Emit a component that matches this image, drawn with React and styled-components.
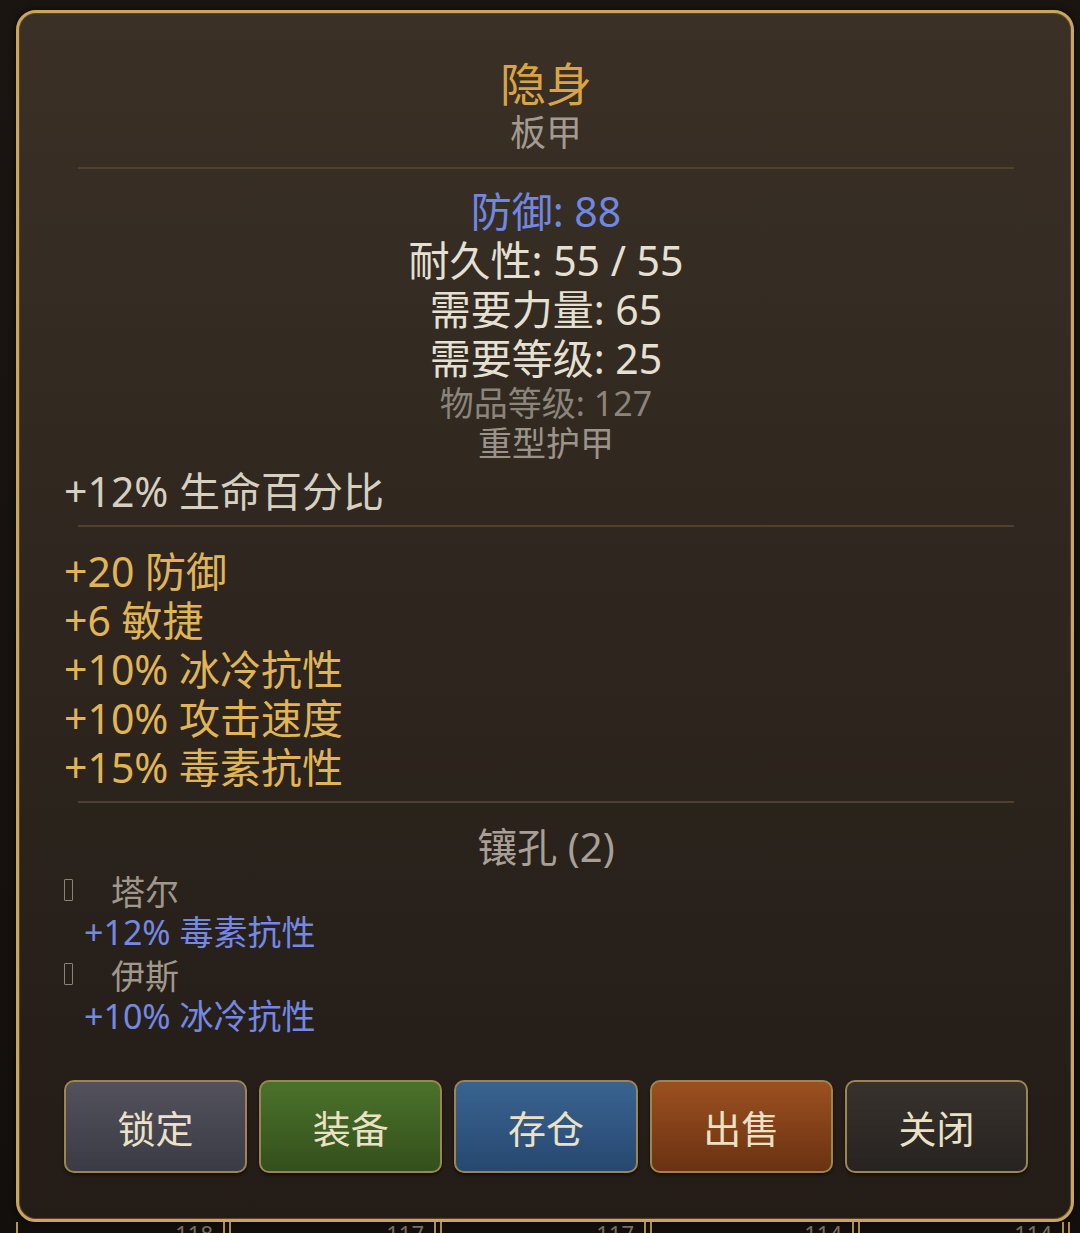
import React from "react";
import styled, { createGlobalStyle } from "styled-components";

const FONT = `"Noto Sans", "Noto Sans CJK SC", sans-serif`;

const Global = createGlobalStyle`
  html, body { margin: 0; padding: 0; background: #17120e; }
  body { font-family: ${FONT}; }
  * { box-sizing: border-box; }
`;

const Page = styled.div`
  width: 1080px;
  height: 1233px;
  overflow: hidden;
  padding: 10px 6px 0 16px;
  background: linear-gradient(#1b1511, #130f0c);
`;

const Panel = styled.div`
  width: 1058px;
  height: 1212px;
  border: 3px solid #c9a55d;
  border-radius: 20px;
  background: linear-gradient(180deg, #3a3026 0%, #2f271f 45%, #231c17 100%);
  box-shadow: inset 0 0 0 1px #5a4627, 0 0 6px rgba(0, 0, 0, 0.7);
  padding: 45px 43px 0 45px;
  display: flex;
  flex-direction: column;
`;

const Center = styled.div`
  display: flex;
  flex-direction: column;
  align-items: center;
  text-align: center;
`;

const Title = styled.div`
  font-size: 46px;
  line-height: 50px;
  color: #d9a442;
  font-weight: 400;
`;

const Subtitle = styled.div`
  margin-top: 3px;
  font-size: 36px;
  line-height: 44px;
  color: #a39b90;
`;

const Divider = styled.div`
  height: 2px;
  margin: ${(p) => p.$m || "13px 14px 0"};
  background: #4f412b;
`;

const Line = styled.div`
  font-size: ${(p) => p.$size || 41}px;
  line-height: ${(p) => p.$lh || 49}px;
  color: ${(p) => p.$color || "#e6e0d2"};
  white-space: pre;
`;

const StatBlock = styled(Center)`
  margin-top: 18px;
`;

const LeftBlock = styled.div`
  display: flex;
  flex-direction: column;
  margin-top: ${(p) => p.$mt || 0}px;
`;

const SocketHead = styled(Center)`
  margin-top: 22px;
`;

const SocketRow = styled.div`
  display: flex;
  align-items: center;
  gap: 38px;
  height: 42px;
  font-size: 34px;
  color: #a0988a;
`;

const Tofu = styled.span`
  display: inline-block;
  width: 9px;
  height: 22px;
  border: 1.5px solid #8b8272;
  border-radius: 1px;
`;

const SocketAffix = styled.div`
  padding-left: 20px;
  height: 42px;
  line-height: 42px;
  font-size: 34px;
  color: #7489e4;
  white-space: pre;
`;

const Buttons = styled.div`
  display: grid;
  grid-template-columns: repeat(5, 1fr);
  gap: 12px;
  margin-top: 43px;
`;

const btnBg = {
  lock: "linear-gradient(#52515c, #3b3b45)",
  equip: "linear-gradient(#4b722b, #33501c)",
  store: "linear-gradient(#3a6391, #264870)",
  sell: "linear-gradient(#9c5020, #6a3212)",
  close: "linear-gradient(#37322d, #272320)",
};

const Button = styled.button`
  height: 93px;
  border: 2px solid #9d8551;
  border-radius: 10px;
  background: ${(p) => btnBg[p.$kind]};
  color: #ebe1c4;
  font-family: ${FONT};
  font-size: 38px;
  box-shadow: 0 2px 3px rgba(0, 0, 0, 0.5);
  padding: 0;
  cursor: pointer;
`;

const Strip = styled.div`
  display: flex;
  height: 20px;
  border-left: 2px solid #b59550;
`;

const Cell = styled.div`
  width: ${(p) => p.$w}px;
  display: flex;
  justify-content: flex-end;
  align-items: flex-start;
  gap: 10px;
  padding-right: 2px;
`;

const CellNum = styled.span`
  font-family: "Noto Sans", sans-serif;
  font-size: 22px;
  line-height: 22px;
  color: #77705f;
`;

const DoubleLine = styled.span`
  width: 8px;
  height: 20px;
  border-left: 2px solid #b08f4c;
  border-right: 2px solid #b08f4c;
`;

const affixes = ["+20 防御", "+6 敏捷", "+10% 冰冷抗性", "+10% 攻击速度", "+15% 毒素抗性"];

const sockets = [
  { name: "塔尔", affix: "+12% 毒素抗性" },
  { name: "伊斯", affix: "+10% 冰冷抗性" },
];

const buttons = [
  { kind: "lock", label: "锁定" },
  { kind: "equip", label: "装备" },
  { kind: "store", label: "存仓" },
  { kind: "sell", label: "出售" },
  { kind: "close", label: "关闭" },
];

const cells = [
  { w: 215, n: "118" },
  { w: 211, n: "117" },
  { w: 210, n: "117" },
  { w: 208, n: "114" },
  { w: 210, n: "114" },
];

export default function App() {
  return (
    <>
      <Global />
      <Page>
        <Panel>
          <Center>
            <Title>隐身</Title>
            <Subtitle>板甲</Subtitle>
          </Center>
          <Divider $m="12px 14px 0" />
          <StatBlock>
            <Line $color="#7088e2">防御: 88</Line>
            <Line>耐久性: 55 / 55</Line>
            <Line>需要力量: 65</Line>
            <Line>需要等级: 25</Line>
            <Line $size={34} $lh={40} $color="#8b857b">物品等级: 127</Line>
            <Line $size={34} $lh={40} $color="#9b948a">重型护甲</Line>
          </StatBlock>
          <LeftBlock $mt={4}>
            <Line $lh={48} $color="#d6d0c0">+12% 生命百分比</Line>
          </LeftBlock>
          <Divider $m="10px 14px 0" />
          <LeftBlock $mt={20}>
            {affixes.map((a) => (
              <Line key={a} $color="#e1b456">{a}</Line>
            ))}
          </LeftBlock>
          <Divider $m="9px 14px 0" />
          <SocketHead>
            <Line $size={40} $lh={44} $color="#a8a096">镶孔 (2)</Line>
          </SocketHead>
          <LeftBlock>
            {sockets.map((s) => (
              <React.Fragment key={s.name}>
                <SocketRow>
                  <Tofu />
                  <span>{s.name}</span>
                </SocketRow>
                <SocketAffix>{s.affix}</SocketAffix>
              </React.Fragment>
            ))}
          </LeftBlock>
          <Buttons>
            {buttons.map((b) => (
              <Button key={b.kind} $kind={b.kind}>{b.label}</Button>
            ))}
          </Buttons>
        </Panel>
        <Strip>
          {cells.map((c, i) => (
            <Cell key={i} $w={c.w}>
              <CellNum>{c.n}</CellNum>
              <DoubleLine />
            </Cell>
          ))}
        </Strip>
      </Page>
    </>
  );
}
